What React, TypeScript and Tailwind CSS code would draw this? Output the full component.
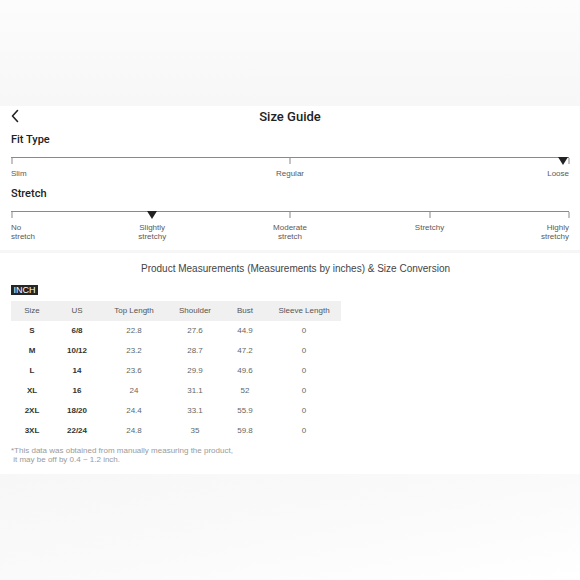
import React from 'react';

const rows = [
  ['S', '6/8', '22.8', '27.6', '44.9', '0'],
  ['M', '10/12', '23.2', '28.7', '47.2', '0'],
  ['L', '14', '23.6', '29.9', '49.6', '0'],
  ['XL', '16', '24', '31.1', '52', '0'],
  ['2XL', '18/20', '24.4', '33.1', '55.9', '0'],
  ['3XL', '22/24', '24.8', '35', '59.8', '0'],
];

const cols = ['Size', 'US', 'Top Length', 'Shoulder', 'Bust', 'Sleeve Length'];
const colW = ['w-[42px]', 'w-[48px]', 'w-[66px]', 'w-[56px]', 'w-[44px]', 'w-[74px]'];

const Marker = ({ at }: { at: number }) => (
  <div className="absolute -top-[1px] -translate-x-1/2" style={{ left: `${at * 100}%` }}>
    <div className="w-0 h-0 border-l-[5px] border-r-[5px] border-t-[8px] border-l-transparent border-r-transparent border-t-[#222]" />
  </div>
);

const Scale = ({ ticks, marker, labels, h }: { ticks: number[]; marker: number; labels: { at: number; text: string[] }[]; h: string }) => (
  <div className="mx-[11px]">
    <div className="relative h-[6px] border-t border-[#8a8a8a]">
      {ticks.map(t => (
        <div key={t} className="absolute top-0 w-px h-[6px] bg-[#8a8a8a] -translate-x-1/2" style={{ left: t === 1 ? 'calc(100% - 0.5px)' : t === 0 ? '0.5px' : `${t * 100}%` }} />
      ))}
      <Marker at={marker} />
    </div>
    <div className={`relative ${h} mt-[6px] text-[8px] leading-[9px] text-[#5a5a5a]`}>
      {labels.map(l => (
        <div
          key={l.text.join()}
          className={`absolute top-0 ${l.at === 0 ? 'left-0 text-left' : l.at === 1 ? 'right-0 text-right' : 'text-center -translate-x-1/2'}`}
          style={l.at > 0 && l.at < 1 ? { left: `${l.at * 100}%` } : undefined}
        >
          {l.text.map(t => <div key={t} className="whitespace-nowrap">{t}</div>)}
        </div>
      ))}
    </div>
  </div>
);

export default function App() {
  return (
    <div className="w-[580px] h-[580px] overflow-hidden flex flex-col bg-[#f8f8f8]" style={{ fontFamily: '"Liberation Sans", Arial, sans-serif' }}>
      <div className="h-[106px] shrink-0 bg-gradient-to-b from-[#fcfcfc] to-[#f7f7f7]" />

      <div className="bg-white shrink-0 h-[144px]">
        <div className="relative h-[22px] flex items-center justify-center" style={{ fontFamily: 'Roboto, sans-serif' }}>
          <svg className="absolute left-[10px] top-[3px]" width="10" height="14" viewBox="0 0 10 14" fill="none">
            <path d="M7.5 1.5 L2.5 7 L7.5 12.5" stroke="#222" strokeWidth="1.6" strokeLinecap="round" strokeLinejoin="round" />
          </svg>
          <span className="text-[13px] font-medium text-[#222]">Size Guide</span>
        </div>

        <div className="px-[11px] mt-[5px] h-[14px] text-[11px] leading-[14px] font-medium text-[#222]" style={{ fontFamily: 'Roboto, sans-serif' }}>Fit Type</div>
        <div className="mt-[10px]">
          <Scale
            h="h-[10px]"
            ticks={[0, 0.5, 1]}
            marker={0.99}
            labels={[
              { at: 0, text: ['Slim'] },
              { at: 0.5, text: ['Regular'] },
              { at: 1, text: ['Loose'] },
            ]}
          />
        </div>

        <div className="px-[11px] mt-[8px] h-[14px] text-[11px] leading-[14px] font-medium text-[#222]" style={{ fontFamily: 'Roboto, sans-serif' }}>Stretch</div>
        <div className="mt-[10px]">
          <Scale
            h="h-[20px]"
            ticks={[0, 0.5, 0.75, 1]}
            marker={0.253}
            labels={[
              { at: 0, text: ['No', 'stretch'] },
              { at: 0.253, text: ['Slightly', 'stretchy'] },
              { at: 0.5, text: ['Moderate', 'stretch'] },
              { at: 0.75, text: ['Stretchy'] },
              { at: 1, text: ['Highly', 'stretchy'] },
            ]}
          />
        </div>
      </div>

      <div className="h-[3px] shrink-0 bg-[#f6f6f6]" />

      <div className="bg-white shrink-0 h-[221px] pt-[10px]">
        <div className="text-center pl-[11px] text-[10px] leading-[12px] text-[#444]">
          Product Measurements (Measurements by inches) &amp; Size Conversion
        </div>
        <div className="px-[11px] mt-[10px] flex">
          <span className="block bg-[#262626] text-white text-[9px] leading-[10px] w-[27px] text-center">INCH</span>
        </div>
        <div className="mx-[11px] mt-[6px] w-[330px]">
          <div className="flex h-[20px] items-center bg-[#f0f0f0] text-[8px] text-[#555]">
            {cols.map((c, i) => (
              <div key={c} className={`${colW[i]} text-center`}>{c}</div>
            ))}
          </div>
          {rows.map(r => (
            <div key={r[0]} className="flex h-[20px] items-center text-[8px] text-[#666]">
              {r.map((v, i) => (
                <div key={i} className={`${colW[i]} text-center ${i < 2 ? 'font-bold text-[#333]' : ''}`}>{v}</div>
              ))}
            </div>
          ))}
        </div>
        <div className="px-[11px] mt-[5px] text-[8px] leading-[9px] text-[#9a9a9a]">
          <div>*This data was obtained from manually measuring the product,</div>
          <div>&nbsp;it may be off by 0.4 ~ 1.2 inch.</div>
        </div>
      </div>

      <div className="flex-1 bg-gradient-to-br from-[#f7f7f7] via-[#fafafa] to-white" />
    </div>
  );
}
